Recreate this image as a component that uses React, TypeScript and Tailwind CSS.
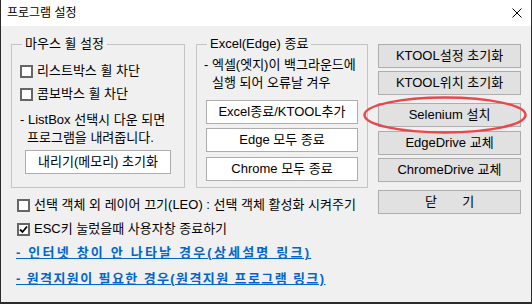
import React from 'react';

const font = "font-['Liberation_Sans','Noto_Sans_CJK_KR',sans-serif]";

const CheckBox = ({ checked = false }: { checked?: boolean }) => (
  <span className="w-[13px] h-[13px] border-2 border-[#666] bg-white flex items-center justify-center shrink-0">
    {checked && (
      <svg width="9" height="9" viewBox="0 0 9 9">
        <path d="M1 4.5 L3.5 7 L8 1.5" fill="none" stroke="#000" strokeWidth="1.8" />
      </svg>
    )}
  </span>
);

const GroupBox = ({
  title,
  width,
  children,
}: {
  title: string;
  width: string;
  children: React.ReactNode;
}) => (
  <div className={`relative h-[144px] border border-[#c4c4c4] ${width}`}>
    <span className="absolute -top-[9px] left-[10px] px-[3px] bg-[#f0f0f0] leading-4">{title}</span>
    {children}
  </div>
);

const WhiteButton = ({ label, className = '' }: { label: string; className?: string }) => (
  <button className={`h-6 bg-white border border-[#adadad] leading-4 text-center ${className}`}>{label}</button>
);

const GrayButton = ({ label, className = '' }: { label: string; className?: string }) => (
  <button className={`w-[143px] h-6 bg-[#e1e1e1] border border-[#adadad] leading-4 text-center ${className}`}>
    {label}
  </button>
);

const App = () => {
  return (
    <div className={`w-[532px] h-[304px] bg-[#2b2b2b] text-[13px] text-black ${font}`}>
      <div className="ml-px w-[530px] h-[302px] bg-[#f0f0f0] flex flex-col">
        {/* title bar */}
        <div className="h-[26px] bg-white flex items-center justify-between pl-[6px] pr-[9px] shrink-0">
          <span className="text-[12px] leading-4">프로그램 설정</span>
          <svg width="10" height="10" viewBox="0 0 10 10">
            <path d="M0.5 0.5 L9.5 9.5 M9.5 0.5 L0.5 9.5" stroke="#000" strokeWidth="1" />
          </svg>
        </div>

        <div className="flex pl-[10px] pr-[10px]">
          {/* left area */}
          <div className="w-[357px] flex flex-col">
            <div className="flex gap-[11px] mt-[18px]">
              <GroupBox title="마우스 휠 설정" width="w-[174px]">
                <div className="flex flex-col pt-[18px]">
                  <label className="flex items-center gap-1 h-4 pl-2">
                    <CheckBox />
                    <span>리스트박스 휠 차단</span>
                  </label>
                  <label className="flex items-center gap-1 h-4 pl-2 mt-[7px]">
                    <CheckBox />
                    <span>콤보박스 휠 차단</span>
                  </label>
                  <p className="h-4 leading-4 ml-2 mt-[10px]">- ListBox 선택시 다운 되면</p>
                  <p className="h-4 leading-4 ml-[15px] mt-[2px]">프로그램을 내려줍니다.</p>
                  <WhiteButton label="내리기(메모리) 초기화" className="w-[146px] ml-[13px] mt-1" />
                </div>
              </GroupBox>
              <GroupBox title="Excel(Edge) 종료" width="w-[172px]">
                <div className="flex flex-col pt-3">
                  <p className="h-4 leading-4 ml-[7px]">- 엑셀(엣지)이 백그라운드에</p>
                  <p className="h-4 leading-4 ml-[15px] mt-[2px]">실행 되어 오류날 겨우</p>
                  <WhiteButton label="Excel종료/KTOOL추가" className="w-[152px] ml-[9px] mt-[9px]" />
                  <WhiteButton label="Edge 모두 종료" className="w-[152px] ml-[9px] mt-1" />
                  <WhiteButton label="Chrome 모두 종료" className="w-[152px] ml-[9px] mt-[5px]" />
                </div>
              </GroupBox>
            </div>

            <label className="flex items-center gap-1 h-4 ml-[6px] mt-[9px] whitespace-nowrap">
              <CheckBox />
              <span>선택 객체 외 레이어 끄기(LEO) : 선택 객체 활성화 시켜주기</span>
            </label>
            <label className="flex items-center gap-1 h-4 ml-[6px] mt-2">
              <CheckBox checked />
              <span>ESC키 눌렀을때 사용자창 종료하기</span>
            </label>
            <a className="h-4 leading-4 ml-[5px] mt-2 font-bold text-[#0066cc] underline tracking-[2.2px] whitespace-nowrap">
              - 인터넷 창이 안 나타날 경우(상세설명 링크)
            </a>
            <a className="h-4 leading-4 ml-[5px] mt-[10px] font-bold text-[#0066cc] underline tracking-[1.4px] whitespace-nowrap">
              - 원격지원이 필요한 경우(원격지원 프로그램 링크)
            </a>
          </div>

          {/* right buttons */}
          <div className="ml-[10px] flex flex-col">
            <GrayButton label="KTOOL설정 초기화" className="mt-[18px]" />
            <GrayButton label="KTOOL위치 초기화" className="mt-[3px]" />
            <div className="relative mt-2">
              <GrayButton label="Selenium 설치" />
              <svg
                className="absolute -left-[15px] -top-[7px] pointer-events-none"
                width="164"
                height="38"
                viewBox="0 0 164 38"
              >
                <ellipse cx="82" cy="19" rx="80.5" ry="17.5" fill="none" stroke="#e8484c" strokeWidth="2.5" />
              </svg>
            </div>
            <GrayButton label="EdgeDrive 교체" className="mt-1" />
            <GrayButton label="ChromeDrive 교체" className="mt-[3px]" />
            <GrayButton label="닫       기" className="mt-2 whitespace-pre" />
          </div>
        </div>
      </div>
    </div>
  );
};

export default App;
